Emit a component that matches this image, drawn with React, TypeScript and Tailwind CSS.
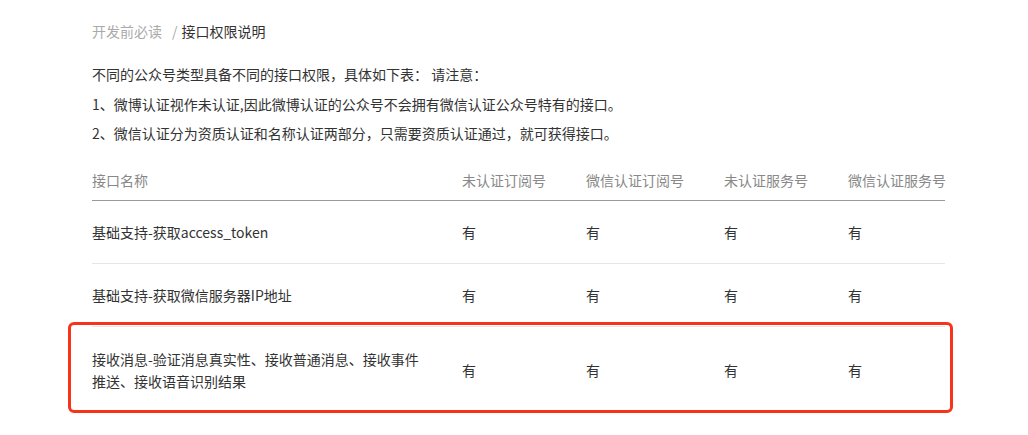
import React from 'react';

const cols = ['未认证订阅号', '微信认证订阅号', '未认证服务号', '微信认证服务号'];

const rows = [
  { name: '基础支持-获取access_token', values: ['有', '有', '有', '有'] },
  { name: '基础支持-获取微信服务器IP地址', values: ['有', '有', '有', '有'] },
  {
    name: '接收消息-验证消息真实性、接收普通消息、接收事件推送、接收语音识别结果',
    values: ['有', '有', '有', '有'],
    marked: true,
  },
];

const gridCols = 'grid grid-cols-[370px_124px_138px_124px_1fr]';

export default function App() {
  return (
    <div
      className="w-[1028px] h-[435px] bg-white overflow-hidden text-[14px] text-[#333]"
      style={{ fontFamily: '"Noto Sans CJK SC", "Liberation Sans", sans-serif' }}
    >
      <div className="pl-[92px] w-[945px]">
        <div className="flex items-center h-[22px] mt-[20px]">
          <span className="text-[#aaa]">开发前必读</span>
          <span className="text-[#aaa] ml-[10px] mr-[4px]">/</span>
          <span className="text-[#333]">接口权限说明</span>
        </div>

        <div className="mt-[21px] leading-[22px]">
          <p>不同的公众号类型具备不同的接口权限，具体如下表： 请注意：</p>
          <p className="mt-[8px]">1、微博认证视作未认证,因此微博认证的公众号不会拥有微信认证公众号特有的接口。</p>
          <p className="mt-[7px]">2、微信认证分为资质认证和名称认证两部分，只需要资质认证通过，就可获得接口。</p>
        </div>

        <div className="mt-[17px]">
          <div className={`${gridCols} h-[40px] items-center text-[#888] border-b border-[#999] whitespace-nowrap`}>
            <div>接口名称</div>
            {cols.map((c) => (
              <div key={c}>{c}</div>
            ))}
          </div>

          {rows.map((r) => (
            <div
              key={r.name}
              className={`${gridCols} relative items-center border-b border-[#e6e6e6] ${
                r.marked ? 'h-[86px] border-b-0' : 'h-[63px]'
              }`}
            >
              <div className="pr-[40px] leading-[22px]">{r.name}</div>
              {r.values.map((v, i) => (
                <div key={i}>{v}</div>
              ))}
              {r.marked && (
                <div className="absolute -left-[24px] -right-[8px] -top-[5px] bottom-0 border-[3px] border-[#f9321a] rounded-[6px] pointer-events-none" />
              )}
            </div>
          ))}
        </div>
      </div>
    </div>
  );
}
